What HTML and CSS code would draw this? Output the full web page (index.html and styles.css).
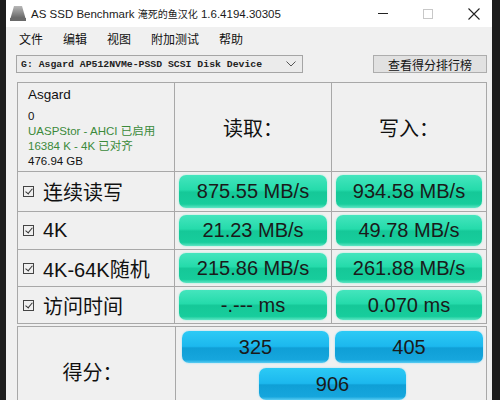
FILE: index.html
```html
<!DOCTYPE html>
<html>
<head>
<meta charset="utf-8">
<link rel="stylesheet" href="styles.css">
</head>
<body>
<div class="window">
  <div class="titlebar">
    <svg class="app-icon" width="20" height="17" viewBox="0 0 20 17">
      <defs>
        <linearGradient id="g1" x1="0" y1="0" x2="0" y2="1">
          <stop offset="0" stop-color="#b8b8b8"/>
          <stop offset="1" stop-color="#5a5a5a"/>
        </linearGradient>
      </defs>
      <polygon points="6,1 14,1 18,15 2,15" fill="url(#g1)"/>
      <rect x="2" y="13" width="16" height="3" fill="#6a6a6a"/>
    </svg>
    <span class="title">AS SSD Benchmark <span class="title-cjk">淹死的鱼汉化</span> 1.6.4194.30305</span>
    <div class="controls">
      <span class="ctl min"></span>
      <span class="ctl max"></span>
      <svg class="ctl close" width="12" height="12" viewBox="0 0 12 12"><path d="M0.5 0.5 L11.5 11.5 M11.5 0.5 L0.5 11.5" stroke="#222" stroke-width="1.1"/></svg>
    </div>
  </div>
  <div class="menubar">
    <span class="menu">文件</span>
    <span class="menu">编辑</span>
    <span class="menu">视图</span>
    <span class="menu">附加测试</span>
    <span class="menu">帮助</span>
  </div>
  <div class="toolbar">
    <div class="select">
      <span class="select-text">G: Asgard AP512NVMe-PSSD SCSI Disk Device</span>
      <svg class="chev" width="10" height="6" viewBox="0 0 10 6"><path d="M0.5 0.5 L5 5 L9.5 0.5" fill="none" stroke="#555" stroke-width="1"/></svg>
    </div>
    <div class="button">查看得分排行榜</div>
  </div>
  <div class="results">
    <div class="cell info">
      <div class="drive">Asgard</div>
      <div>0</div>
      <div class="ok">UASPStor - AHCI 已启用</div>
      <div class="ok">16384 K - 4K 已对齐</div>
      <div>476.94 GB</div>
    </div>
    <div class="cell head">读取：</div>
    <div class="cell head">写入：</div>

    <div class="cell label"><span class="check"></span>连续读写</div>
    <div class="cell val"><div class="bar">875.55 MB/s</div></div>
    <div class="cell val"><div class="bar">934.58 MB/s</div></div>

    <div class="cell label"><span class="check"></span>4K</div>
    <div class="cell val"><div class="bar">21.23 MB/s</div></div>
    <div class="cell val"><div class="bar">49.78 MB/s</div></div>

    <div class="cell label"><span class="check"></span>4K-64K随机</div>
    <div class="cell val"><div class="bar">215.86 MB/s</div></div>
    <div class="cell val"><div class="bar">261.88 MB/s</div></div>

    <div class="cell label"><span class="check"></span>访问时间</div>
    <div class="cell val"><div class="bar">-.--- ms</div></div>
    <div class="cell val"><div class="bar">0.070 ms</div></div>
  </div>
  <div class="score">
    <div class="score-label">得分：</div>
    <div class="score-bars">
      <div class="sbar">325</div>
      <div class="sbar">405</div>
      <div class="sbar total">906</div>
    </div>
  </div>
</div>
</body>
</html>
```

FILE: styles.css
```css
* { box-sizing: border-box; }
html, body {
  margin: 0;
  padding: 0;
  width: 500px;
  height: 400px;
  overflow: hidden;
  background: #1d1d1d;
}
body {
  font-family: "Liberation Sans", "Noto Sans CJK SC", sans-serif;
  color: #111;
}
.window {
  margin-left: 6px;
  width: 486px;
  height: 420px;
  background: #f0f0f0;
}
.titlebar {
  height: 27px;
  background: #fff;
  display: flex;
  align-items: center;
  padding-left: 2px;
}
.app-icon { margin-right: 3px; margin-top: -1px; }
.title {
  font-size: 11.5px;
  color: #1a1a1a;
  white-space: nowrap;
}
.title-cjk {
  font-family: "Noto Sans CJK SC", sans-serif;
  font-size: 10px;
}
.controls {
  margin-left: auto;
  display: flex;
  align-items: center;
  height: 100%;
}
.ctl { display: block; }
.min {
  width: 10px;
  height: 1px;
  background: #222;
  margin-right: 35px;
}
.max {
  width: 10px;
  height: 10px;
  border: 1px solid #c8c8c8;
  margin-right: 35px;
}
.close { margin-right: 12px; }

.menubar {
  height: 23px;
  display: flex;
  align-items: center;
  padding-left: 3px;
  font-family: "Noto Sans CJK SC", sans-serif;
  font-size: 12px;
}
.menu { padding: 0 10px; }

.toolbar {
  display: flex;
  align-items: center;
  margin-top: 5px;
  padding-left: 10px;
  padding-right: 5px;
}
.select {
  width: 287px;
  height: 18px;
  border: 1px solid #a5a5a5;
  background: #ebebeb;
  display: flex;
  align-items: center;
  padding-left: 4px;
}
.select-text {
  font-family: "Liberation Mono", monospace;
  font-weight: bold;
  font-size: 9.8px;
  color: #222;
}
.chev { margin-left: auto; margin-right: 6px; }
.button {
  margin-left: auto;
  width: 114px;
  height: 18px;
  border: 1px solid #adadad;
  background: #e1e1e1;
  font-family: "Noto Sans CJK SC", sans-serif;
  font-size: 12px;
  display: flex;
  align-items: center;
  justify-content: center;
}

.results {
  margin: 9px 0 0 11px;
  width: 470px;
  display: grid;
  grid-template-columns: 157px 157px 1fr;
  grid-template-rows: 89px 40px 38px 37px 37px;
  border-top: 1px solid #a8a8a8;
  border-left: 1px solid #a8a8a8;
}
.cell {
  border-right: 1px solid #a8a8a8;
  border-bottom: 1px solid #a8a8a8;
}
.info {
  padding: 4px 0 0 10px;
  font-size: 11.5px;
  line-height: 15px;
}
.drive { font-size: 13.5px; margin-bottom: 7px; }
.ok { color: #3b8a3b; }
.head {
  display: flex;
  align-items: center;
  justify-content: center;
  font-family: "Noto Sans CJK SC", sans-serif;
  font-size: 20px;
  padding-top: 1px;
}
.label {
  display: flex;
  align-items: center;
  padding-left: 5px;
  font-size: 20px;
}
.check {
  width: 11px;
  height: 11px;
  border: 1px solid #444;
  margin-right: 9px;
  position: relative;
  flex: none;
}
.check::after {
  content: "";
  position: absolute;
  left: 2.5px;
  top: 0px;
  width: 3px;
  height: 6px;
  border-right: 1.3px solid #333;
  border-bottom: 1.3px solid #333;
  transform: rotate(40deg);
}
.val {
  padding: 3px 4px 3px 4px;
}
.bar {
  height: 100%;
  border-radius: 7px;
  background: linear-gradient(to bottom, #44e5bd 0%, #25dbab 45%, #15c898 52%, #17cd9c 88%, #5ee6c4 100%);
  box-shadow: 0 0 2px #8ff0d6;
  display: flex;
  align-items: center;
  justify-content: center;
  font-size: 20px;
  color: #1a1a1a;
}

.score {
  margin: 2px 0 0 11px;
  width: 470px;
  height: 90px;
  display: grid;
  grid-template-columns: 158px 1fr;
  border: 1px solid #a8a8a8;
}
.score-label {
  border-right: 1px solid #a8a8a8;
  display: flex;
  align-items: center;
  justify-content: center;
  font-family: "Noto Sans CJK SC", sans-serif;
  font-size: 20px;
  padding: 0 8px 0 0;
}
.score-bars {
  display: grid;
  grid-template-columns: 147px 148px;
  grid-auto-rows: 32px;
  column-gap: 6px;
  row-gap: 5px;
  padding: 4px 0 0 6px;
}
.sbar {
  border-radius: 7px;
  background: linear-gradient(to bottom, #2ccaf5 0%, #1cb8ee 48%, #0f9fd6 53%, #16a6dd 90%, #5acdf3 100%);
  box-shadow: 0 0 2px #8fdcf5;
  display: flex;
  align-items: center;
  justify-content: center;
  font-size: 20px;
  color: #1a1a1a;
}
.total {
  grid-column: 1 / span 2;
  width: 147px;
  justify-self: center;
}
```
